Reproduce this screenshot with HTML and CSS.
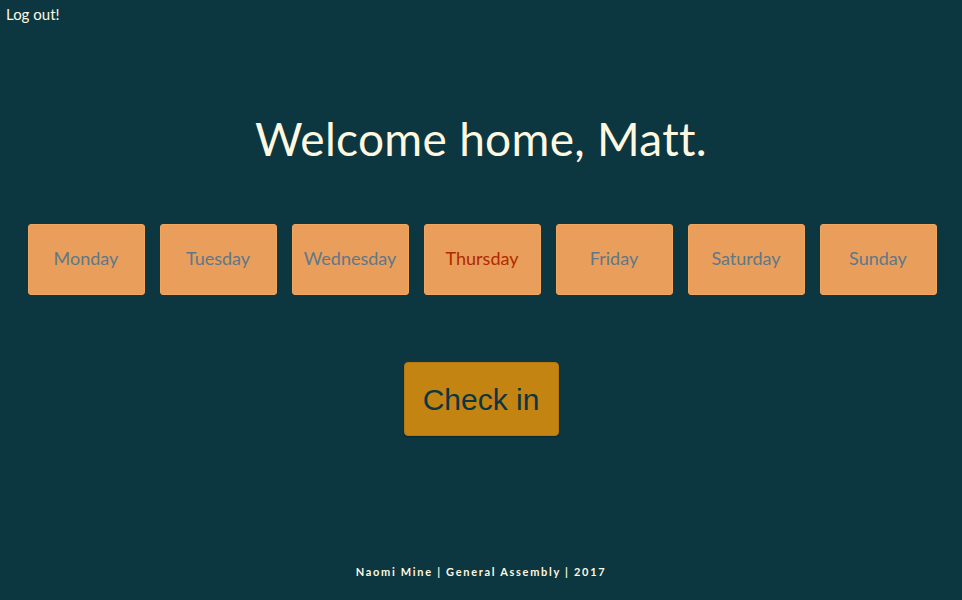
FILE: index.html
```html
<!DOCTYPE html>
<html lang="en">
<head>
<meta charset="utf-8">
<title>Welcome home</title>
<link rel="stylesheet" href="styles.css">
</head>
<body>
<header class="top">
  <a class="logout" href="#">Log out!</a>
</header>
<main class="main">
  <h1 class="welcome">Welcome home, Matt.</h1>
  <div class="days">
    <div class="day">Monday</div>
    <div class="day">Tuesday</div>
    <div class="day">Wednesday</div>
    <div class="day day-today">Thursday</div>
    <div class="day">Friday</div>
    <div class="day">Saturday</div>
    <div class="day">Sunday</div>
  </div>
  <button class="checkin">Check in</button>
</main>
<footer class="footer">Naomi Mine | General Assembly | 2017</footer>
</body>
</html>
```
FILE: styles.css
```css
html, body {
  margin: 0;
  padding: 0;
}
body {
  background: #0c3640;
  color: #fff8e1;
  font-family: "Lato", "Noto Sans", sans-serif;
  width: 962px;
  height: 600px;
  overflow: hidden;
  display: flex;
  flex-direction: column;
}
.top {
  padding: 4px 6px 0;
  height: 21px;
}
.logout {
  color: #fff8e1;
  text-decoration: none;
  font-size: 15px;
}
.main {
  display: flex;
  flex-direction: column;
  align-items: center;
  flex: 1;
}
.welcome {
  margin: 84px 0 0;
  font-size: 46px;
  font-weight: 400;
  line-height: 60px;
  letter-spacing: 0.3px;
}
.days {
  margin-top: 55px;
  display: flex;
  gap: 15px;
  padding-left: 2px;
}
.day {
  width: 115px;
  height: 65px;
  padding-bottom: 4px;
  box-sizing: content-box;
  background: #e99e5b;
  border: 1px solid #f2a55c;
  border-radius: 3px;
  display: flex;
  align-items: center;
  justify-content: center;
  color: #5e7889;
  font-size: 18px;
}
.day-today {
  color: #b02a00;
}
.checkin {
  margin-top: 67px;
  width: 155px;
  height: 74px;
  background: #c38412;
  border: 1px solid #b5790f;
  border-radius: 4px;
  box-shadow: 0 1px 2px rgba(0,0,0,0.3);
  color: #0c3640;
  font-family: "Liberation Sans", Arial, sans-serif;
  font-size: 30px;
  padding: 2px 0 0;
}
.footer {
  text-align: center;
  font-size: 11px;
  font-weight: 700;
  letter-spacing: 1.7px;
  padding-bottom: 22px;
}
```
